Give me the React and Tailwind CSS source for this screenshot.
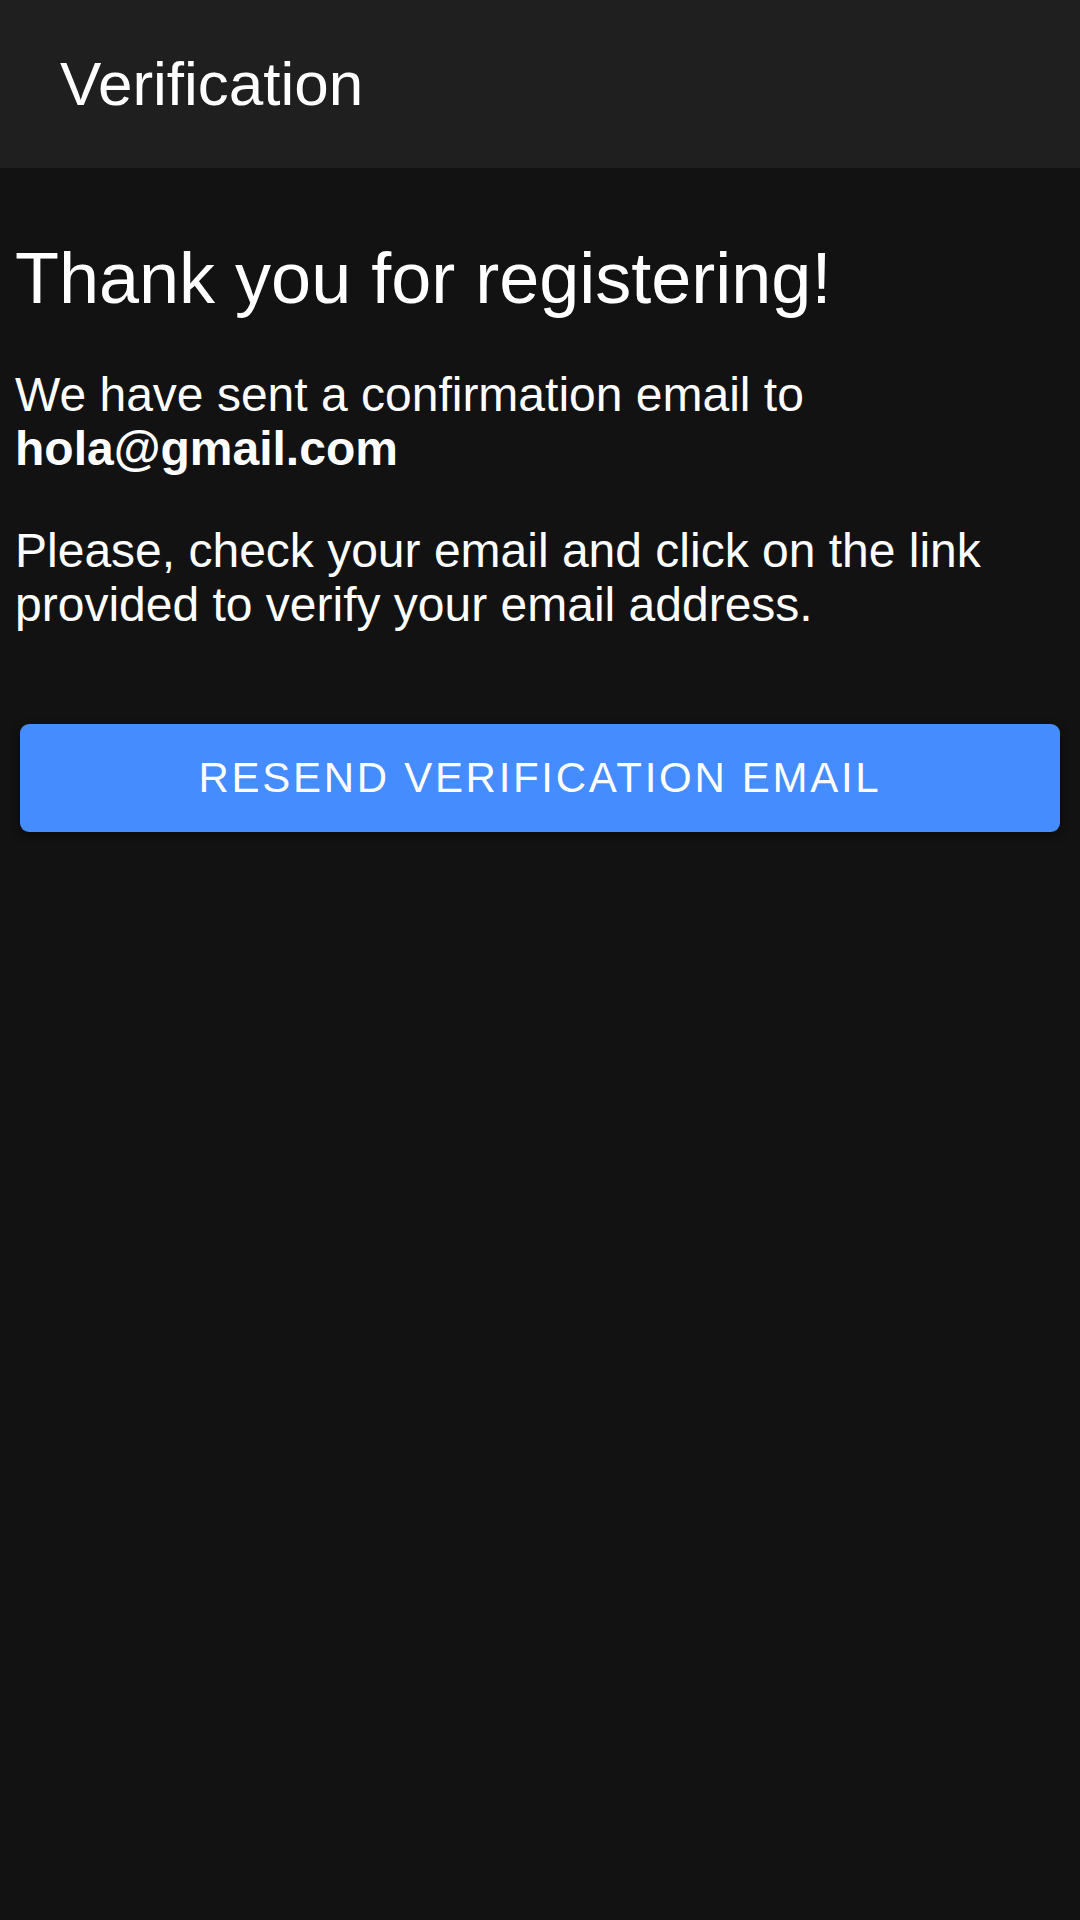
import React from 'react';

export default function App() {
  const email = 'hola@gmail.com';

  return (
    <div className="min-h-[1920px] w-[1080px] bg-[#121212] text-white font-['Liberation_Sans',Arial,sans-serif]">
      <header className="h-[168px] bg-[#1f1f1f] flex items-center pl-[60px]">
        <h2 className="text-[62px] leading-[1.15]">Verification</h2>
      </header>

      <main className="pl-[15px] pr-4">
        <h1 className="mt-[69px] text-[72px] leading-[1.15]">Thank you for registering!</h1>

        <p className="mt-[48px] text-[48px] leading-[54px]">
          We have sent a confirmation email to
          <br />
          <span className="font-bold">{email}</span>
        </p>

        <p className="mt-[48px] text-[48px] leading-[54px]">
          Please, check your email and click on the link provided to verify your email address.
        </p>
      </main>

      <div className="mt-[92px] px-[20px] flex">
        <button className="flex-1 h-[108px] rounded-[9px] bg-[#448cff] shadow-[0_3px_8px_rgba(0,0,0,0.5)] flex items-center justify-center text-[42px] tracking-[2.7px] uppercase">
          Resend verification email
        </button>
      </div>
    </div>
  );
}
